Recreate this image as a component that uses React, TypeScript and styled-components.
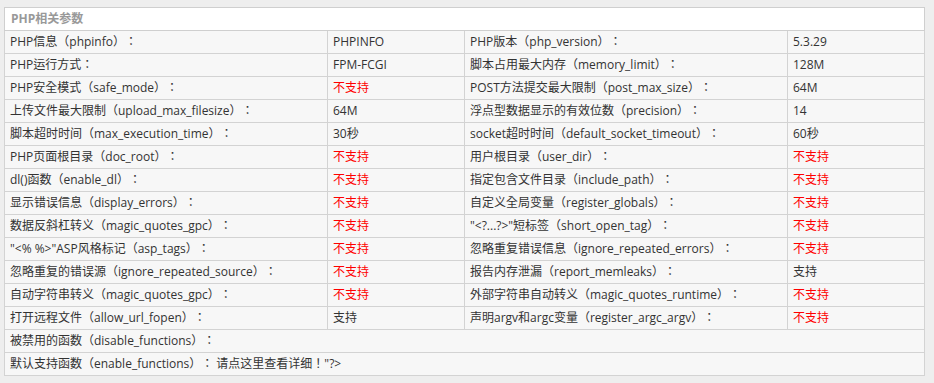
import React from "react";
import styled, { createGlobalStyle } from "styled-components";

const Global = createGlobalStyle`
  html, body { margin: 0; padding: 0; background: #eeeeee; }
  body {
    font-family: "Open Sans", "Noto Sans CJK KR", sans-serif;
    font-size: 12px;
    color: #333;
    text-spacing-trim: space-all;
  }
`;

const Page = styled.div`
  padding: 7px 11px 8px 4px;
`;

const Table = styled.table`
  width: 920px;
  border-collapse: collapse;
  table-layout: fixed;
  background: #f7f7f7;
  border: 1px solid #cfcfcf;
`;

const HeadCell = styled.th`
  height: 22px;
  padding: 0 0 0 6px;
  text-align: left;
  font-weight: bold;
  color: #999;
  background: #fff;
  border: 1px solid #cfcfcf;
  line-height: 22px;
`;

const Cell = styled.td<{ $bad?: boolean }>`
  height: 22px;
  padding: 0 0 0 5px;
  border: 1px solid #d3d3d3;
  line-height: 22px;
  white-space: nowrap;
  overflow: hidden;
  text-spacing-trim: space-all;
  color: ${(p) => (p.$bad ? "#ff0000" : "#333")};
`;

type Pair = [string, string];
const rows: [Pair, Pair][] = [
  [["PHP信息（phpinfo）：", "PHPINFO"], ["PHP版本（php_version）：", "5.3.29"]],
  [["PHP运行方式：", "FPM-FCGI"], ["脚本占用最大内存（memory_limit）：", "128M"]],
  [["PHP安全模式（safe_mode）：", "不支持"], ["POST方法提交最大限制（post_max_size）：", "64M"]],
  [["上传文件最大限制（upload_max_filesize）：", "64M"], ["浮点型数据显示的有效位数（precision）：", "14"]],
  [["脚本超时时间（max_execution_time）：", "30秒"], ["socket超时时间（default_socket_timeout）：", "60秒"]],
  [["PHP页面根目录（doc_root）：", "不支持"], ["用户根目录（user_dir）：", "不支持"]],
  [["dl()函数（enable_dl）：", "不支持"], ["指定包含文件目录（include_path）：", "不支持"]],
  [["显示错误信息（display_errors）：", "不支持"], ["自定义全局变量（register_globals）：", "不支持"]],
  [["数据反斜杠转义（magic_quotes_gpc）：", "不支持"], ["\"<?...?>\"短标签（short_open_tag）：", "不支持"]],
  [["\"<% %>\"ASP风格标记（asp_tags）：", "不支持"], ["忽略重复错误信息（ignore_repeated_errors）：", "不支持"]],
  [["忽略重复的错误源（ignore_repeated_source）：", "不支持"], ["报告内存泄漏（report_memleaks）：", "支持"]],
  [["自动字符串转义（magic_quotes_gpc）：", "不支持"], ["外部字符串自动转义（magic_quotes_runtime）：", "不支持"]],
  [["打开远程文件（allow_url_fopen）：", "支持"], ["声明argv和argc变量（register_argc_argv）：", "不支持"]],
];

export default function App() {
  return (
    <Page>
      <Global />
      <Table>
        <colgroup>
          <col style={{ width: 323 }} />
          <col style={{ width: 137 }} />
          <col style={{ width: 323 }} />
          <col style={{ width: 137 }} />
        </colgroup>
        <thead>
          <tr>
            <HeadCell colSpan={4}>PHP相关参数</HeadCell>
          </tr>
        </thead>
        <tbody>
          {rows.map(([a, b], i) => (
            <tr key={i}>
              <Cell>{a[0]}</Cell>
              <Cell $bad={a[1] === "不支持"}>{a[1]}</Cell>
              <Cell>{b[0]}</Cell>
              <Cell $bad={b[1] === "不支持"}>{b[1]}</Cell>
            </tr>
          ))}
          <tr>
            <Cell colSpan={4}>被禁用的函数（disable_functions）：</Cell>
          </tr>
          <tr>
            <Cell colSpan={4}>默认支持函数（enable_functions）：&nbsp;请点这里查看详细！"?&gt;</Cell>
          </tr>
        </tbody>
      </Table>
    </Page>
  );
}
